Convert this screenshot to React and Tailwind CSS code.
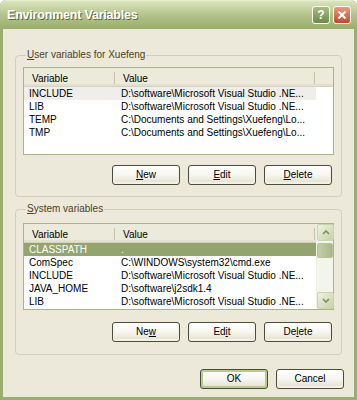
import React from "react";

const font = { fontFamily: '"Liberation Sans", Arial, sans-serif' };

const userVars = [
  ["INCLUDE", "D:\\software\\Microsoft Visual Studio .NE..."],
  ["LIB", "D:\\software\\Microsoft Visual Studio .NE..."],
  ["TEMP", "C:\\Documents and Settings\\Xuefeng\\Lo..."],
  ["TMP", "C:\\Documents and Settings\\Xuefeng\\Lo..."],
];

const systemVars = [
  ["CLASSPATH", "."],
  ["ComSpec", "C:\\WINDOWS\\system32\\cmd.exe"],
  ["INCLUDE", "D:\\software\\Microsoft Visual Studio .NE..."],
  ["JAVA_HOME", "D:\\software\\j2sdk1.4"],
  ["LIB", "D:\\software\\Microsoft Visual Studio .NE..."],
];

function Key({ children }) {
  return <span className="underline underline-offset-1">{children}</span>;
}

function Button({ children, primary }) {
  return (
    <button
      className={
        "w-[68px] h-[20px] rounded-[3px] border border-[#4a4d3c] bg-gradient-to-b from-[#ffffff] via-[#f7f6ef] to-[#e2dfcd] text-[10px] text-black leading-none " +
        (primary ? "shadow-[inset_0_0_0_2px_#b6cc8c]" : "shadow-[inset_0_-1px_0_1px_#f3f1e6]")
      }
    >
      {children}
    </button>
  );
}

function Header() {
  return (
    <div className="flex h-[19px] pt-[2px] bg-[#ebeadb] border-b border-[#d5d2bf] shadow-[inset_0_-2px_0_#e3e0cd] text-[10px] text-black">
      <div className="w-[91px] pl-[8px] flex items-center border-r border-[#c5c2ae] my-[2px]">Variable</div>
      <div className="w-[200px] pl-[8px] flex items-center border-r border-[#c5c2ae] my-[2px]">Value</div>
      <div className="flex-1" />
    </div>
  );
}

function Row({ name, value, state }) {
  const bg =
    state === "selected"
      ? "bg-[#94a46f] text-white"
      : state === "inactive"
      ? "bg-[#efeeea] text-black"
      : "text-black";
  return (
    <div className={"flex h-[13px] w-[292px] items-center text-[10px] leading-none " + bg}>
      <div className="w-[91px] pl-[5px] whitespace-nowrap">{name}</div>
      <div className="w-[201px] pl-[6px] whitespace-nowrap">{value}</div>
    </div>
  );
}

function ArrowBtn({ up }) {
  return (
    <div className="h-[17px] w-[17px] rounded-[2px] border border-[#c9d3b0] bg-gradient-to-br from-[#eef2e0] to-[#c6d2a6] flex items-center justify-center">
      <svg width="8" height="5" viewBox="0 0 8 5">
        <path
          d={up ? "M1 4 L4 1 L7 4" : "M1 1 L4 4 L7 1"}
          fill="none"
          stroke="#7d8c5a"
          strokeWidth="1.6"
        />
      </svg>
    </div>
  );
}

function Group({ title, mt, pb, children }) {
  return (
    <fieldset
      className={"mx-[12px] border border-[#d0cebf] rounded-[4px] px-[7px] " + mt + " " + pb}
    >
      <legend className="ml-[3px] px-[1px] text-[10px] leading-[12px] text-[#4b4125]">
        {title}
      </legend>
      {children}
    </fieldset>
  );
}

export default function App() {
  return (
    <div
      className="w-[357px] h-[400px] flex flex-col bg-[#9aad72] rounded-t-[6px] overflow-hidden"
      style={font}
    >
      {/* title bar */}
      <div className="h-[29px] flex items-center pl-[7px] pr-[6px] bg-gradient-to-b from-[#dbe4bd] via-[#b3c38a] to-[#9aad6d] border-t border-[#e6edcf]">
        <span className="flex-1 text-white font-bold text-[12.5px] tracking-[-0.2px] [text-shadow:1px_1px_0_#5d6d3a]">
          Environment Variables
        </span>
        <div className="flex gap-[3px] mt-[-1px]">
          <div className="w-[18px] h-[18px] rounded-[3px] border border-white bg-gradient-to-b from-[#a8bd83] to-[#6f8a4c] flex items-center justify-center text-white font-bold text-[12px] leading-none">
            ?
          </div>
          <div className="w-[18px] h-[18px] rounded-[3px] border border-white bg-gradient-to-b from-[#e89a7e] to-[#c4452b] flex items-center justify-center">
            <svg width="10" height="10" viewBox="0 0 10 10">
              <path d="M1.5 1.5 L8.5 8.5 M8.5 1.5 L1.5 8.5" stroke="white" strokeWidth="2" />
            </svg>
          </div>
        </div>
      </div>

      {/* body */}
      <div className="flex-1 mx-[3px] mb-[3px] bg-[#ece9da] flex flex-col">
        <Group title={<><Key>U</Key>ser variables for Xuefeng</>} mt="mt-[20px]" pb="pb-[11px]">
          <div className="mt-[6px] h-[88px] border border-[#a8b58b] bg-white">
            <Header />
            {userVars.map(([n, v], i) => (
              <Row key={n} name={n} value={v} state={i === 0 ? "inactive" : ""} />
            ))}
          </div>
          <div className="mt-[10px] flex justify-end gap-[8px] mr-[2px]">
            <Button><Key>N</Key>ew</Button>
            <Button><Key>E</Key>dit</Button>
            <Button><Key>D</Key>elete</Button>
          </div>
        </Group>

        <Group title={<><Key>S</Key>ystem variables</>} mt="mt-[6px]" pb="pb-[12px]">
          <div className="mt-[8px] h-[87px] border border-[#a8b58b] bg-white flex">
            <div className="flex-1">
              <Header />
              {systemVars.map(([n, v], i) => (
                <Row key={n} name={n} value={v} state={i === 0 ? "selected" : ""} />
              ))}
            </div>
            <div className="w-[17px] flex flex-col bg-[#f3f4ec] border-l border-[#eef0e4]">
              <ArrowBtn up />
              <div className="mt-[2px] h-[15px] rounded-[2px] border border-[#b5c196] bg-gradient-to-r from-[#c4cfa4] to-[#a9b889]" />
              <div className="flex-1" />
              <ArrowBtn />
            </div>
          </div>
          <div className="mt-[12px] flex justify-end gap-[8px] mr-[2px]">
            <Button>Ne<Key>w</Key></Button>
            <Button>Ed<Key>i</Key>t</Button>
            <Button>De<Key>l</Key>ete</Button>
          </div>
        </Group>

        <div className="mt-[14px] flex justify-end gap-[8px] mr-[10px]">
          <Button primary>OK</Button>
          <Button>Cancel</Button>
        </div>
      </div>
    </div>
  );
}
